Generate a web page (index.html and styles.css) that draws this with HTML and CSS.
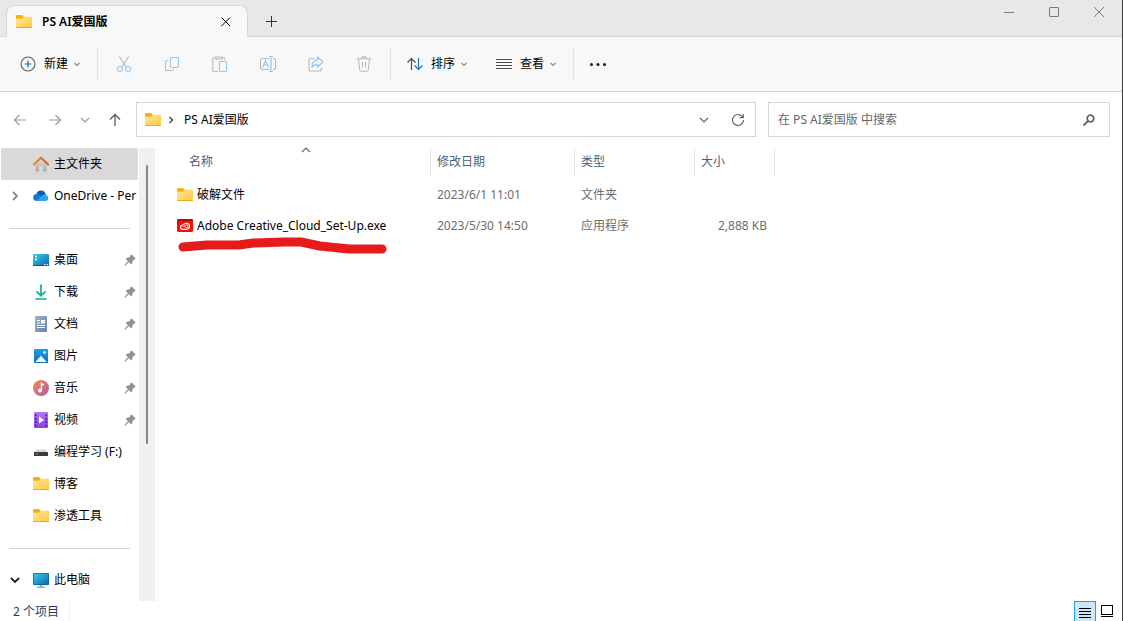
FILE: index.html
```html
<!DOCTYPE html>
<html lang="zh-CN">
<head>
<meta charset="utf-8">
<meta name="viewport" content="width=device-width, initial-scale=1">
<title>PS AI爱国版</title>
<link rel="stylesheet" href="styles.css">
</head>
<body>
<svg class="sprite" aria-hidden="true">
  <defs>
    <linearGradient id="g-folder" x1="0" y1="0" x2="1" y2="1"><stop offset="0" stop-color="#ffe69a"/><stop offset="1" stop-color="#ffca3a"/></linearGradient>
    <linearGradient id="g-roof" x1="0" y1="0" x2="1" y2="0"><stop offset="0" stop-color="#f08a24"/><stop offset="1" stop-color="#d9590f"/></linearGradient>
    <linearGradient id="g-wall" x1="0" y1="0" x2="0" y2="1"><stop offset="0" stop-color="#e4e4e4"/><stop offset="1" stop-color="#a9a9a9"/></linearGradient>
    <linearGradient id="g-screen" x1="0" y1="0" x2="1" y2="1"><stop offset="0" stop-color="#35d1e2"/><stop offset="1" stop-color="#0f66b5"/></linearGradient>
    <linearGradient id="g-doc" x1="0" y1="0" x2="1" y2="1"><stop offset="0" stop-color="#9db4cc"/><stop offset="1" stop-color="#6383a6"/></linearGradient>
    <linearGradient id="g-music" x1="0" y1="0" x2="1" y2="1"><stop offset="0" stop-color="#f19052"/><stop offset="1" stop-color="#ae5aa6"/></linearGradient>
    <linearGradient id="g-video" x1="0" y1="0" x2="0" y2="1"><stop offset="0" stop-color="#b377f5"/><stop offset="1" stop-color="#8b3fe4"/></linearGradient>
    <linearGradient id="g-picture" x1="0" y1="0" x2="0" y2="1"><stop offset="0" stop-color="#1da1e8"/><stop offset="1" stop-color="#0b6cc2"/></linearGradient>
  </defs>
  <symbol id="folder" viewBox="0 0 16 16"><path d="M0 2Q0 1 1 1H6L8 3V6H0Z" fill="#f5b30a"/><path d="M0 4.800H6L8 2.800H15Q16 2.800 16 3.800V13Q16 14 15 14H1Q0 14 0 13Z" fill="url(#g-folder)"/><path d="M.3 13.500H15.700" stroke="#e7a928"/></symbol>
  <symbol id="close" viewBox="0 0 16 16"><path d="M3.500 3.500L12 12M12 3.500L3.500 12" stroke="currentColor" fill="none"/></symbol>
  <symbol id="plus" viewBox="0 0 16 16"><path d="M3 8.500H14M8.500 3V14" stroke="currentColor" fill="none"/></symbol>
  <symbol id="chevron" viewBox="0 0 16 16"><path d="M4 6L8 10L12 6" stroke="currentColor" fill="none" stroke-width="1.200"/></symbol>
  <symbol id="chevron-bold" viewBox="0 0 16 16"><path d="M4 6L8 10L12 6" stroke="currentColor" fill="none" stroke-width="1.800"/></symbol>
  <symbol id="chevron-small" viewBox="0 0 16 16"><path d="M5.500 7L8 9.500L10.500 7" stroke="currentColor" fill="none" stroke-width="1.200"/></symbol>
  <symbol id="next" viewBox="0 0 16 16"><path d="M6 4L10 8L6 12" stroke="currentColor" fill="none" stroke-width="1.800"/></symbol>
  <symbol id="left" viewBox="0 0 16 16"><path d="M14 8H2.500M7.500 3L2.500 8L7.500 13" stroke="currentColor" fill="none" stroke-width="1.200"/></symbol>
  <symbol id="right" viewBox="0 0 16 16"><path d="M2 8H13.500M8.500 3L13.500 8L8.500 13" stroke="currentColor" fill="none" stroke-width="1.200"/></symbol>
  <symbol id="up" viewBox="0 0 16 16"><path d="M8 14V2.500M3 7.500L8 2.500L13 7.500" stroke="currentColor" fill="none" stroke-width="1.300"/></symbol>
  <symbol id="new" viewBox="0 0 16 16"><circle cx="8" cy="8" r="7" fill="none" stroke="#5b5b5b" stroke-width="1.100"/><path d="M8 4.600V11.400M4.600 8H11.400" stroke="#0f6cbd" stroke-width="1.200"/></symbol>
  <symbol id="cut" viewBox="0 0 16 16"><path d="M3.300 .5L10 11M12.700 .5L6 11" stroke="#b9b9b9" fill="none" stroke-width="1.100"/><circle cx="3.900" cy="13" r="2.500" fill="none" stroke="#9ccbf0" stroke-width="1.200"/><circle cx="12.100" cy="13" r="2.500" fill="none" stroke="#9ccbf0" stroke-width="1.200"/></symbol>
  <symbol id="copy" viewBox="0 0 16 16"><path d="M4.500 4.500H3.500Q1.500 4.500 1.500 6.500V12.500Q1.500 14.500 3.500 14.500H7.500Q9.500 14.500 9.500 13" fill="none" stroke="#bdbdbd" stroke-width="1.100"/><rect x="6.500" y="1.500" width="8" height="10" rx="1.500" fill="none" stroke="#93c7ef" stroke-width="1.100"/></symbol>
  <symbol id="paste" viewBox="0 0 16 16"><path d="M6 15.500H2Q.8 15.500 .8 14V3Q.8 1.700 2 1.700H4M10 1.700H12Q13 1.700 13 3V4M4 1H10V3H4Z" fill="none" stroke="#b9b9b9" stroke-width="1.100"/><rect x="7.500" y="5.500" width="7" height="10" rx="1" fill="none" stroke="#93c7ef" stroke-width="1.100"/></symbol>
  <symbol id="rename" viewBox="0 0 16 16"><path d="M9 2.500H2.500Q.5 2.500 .5 4.500V11.500Q.5 13.500 2.500 13.500H9M13 2.500H13.500Q15.500 2.500 15.500 4.500V11.500Q15.500 13.500 13.500 13.500H13" fill="none" stroke="#b9b9b9" stroke-width="1.100"/><path d="M2.700 11.500L5.500 4.500L8.300 11.500M3.800 9H7.200M11 .5V15.500M9 .5H13M9 15.500H13" fill="none" stroke="#93c7ef" stroke-width="1.200"/></symbol>
  <symbol id="share" viewBox="0 0 16 16"><path d="M6 2.500H3Q1 2.500 1 4.500V13Q1 15 3 15H11.500Q13.500 15 13.500 13V11.500" fill="none" stroke="#b9b9b9" stroke-width="1.100"/><path d="M9.500 1L15 6L9.500 11V8.300Q6 8 4 11.500Q4 4.500 9.500 3.800Z" fill="none" stroke="#93c7ef" stroke-width="1.200" stroke-linejoin="round"/></symbol>
  <symbol id="trash" viewBox="0 0 16 16"><path d="M.8 2.700H15.200M5.700 2.500Q5.700 .6 8 .6T10.300 2.500M2.500 3L3.800 14Q4 15.300 5.200 15.300H10.800Q12 15.300 12.200 14L13.500 3M6.500 6V11.500M9.500 6V11.500" fill="none" stroke="#b9b9b9" stroke-width="1.100"/></symbol>
  <symbol id="sort" viewBox="0 0 16 16"><path d="M4.500 14V2.500M.5 6.500L4.500 2.500L8.500 6.500" fill="none" stroke="#4e4e4e" stroke-width="1.200"/><path d="M11.500 2V13.500M7.500 9.500L11.500 13.500L15.500 9.500" fill="none" stroke="#0a78d4" stroke-width="1.200"/></symbol>
  <symbol id="view" viewBox="0 0 16 16"><path d="M0 3.500H16M0 6.500H16M0 9.500H16M0 12.500H16" stroke="#4e4e4e"/></symbol>
  <symbol id="more" viewBox="0 0 16 16"><g fill="#1b1b1b"><circle cx="1.500" cy="8.500" r="1.500"/><circle cx="8" cy="8.500" r="1.500"/><circle cx="14.500" cy="8.500" r="1.500"/></g></symbol>
  <symbol id="refresh" viewBox="0 0 16 16"><path d="M12.900 5.500A5.500 5.500 0 1 0 13.500 8M13.300 2V5.700H9.600" fill="none" stroke="currentColor" stroke-width="1.200"/></symbol>
  <symbol id="search" viewBox="0 0 16 16"><circle cx="9.500" cy="6.500" r="3.300" fill="none" stroke="currentColor" stroke-width="1.800"/><path d="M7 9L2.500 13.500" stroke="currentColor" stroke-width="1.800"/></symbol>
  <symbol id="minimize" viewBox="0 0 16 16"><path d="M3 8.500H13" stroke="currentColor"/></symbol>
  <symbol id="maximize" viewBox="0 0 16 16"><rect x="3.500" y="3.500" width="9" height="9" rx=".5" fill="none" stroke="currentColor"/></symbol>
  <symbol id="window-close" viewBox="0 0 16 16"><path d="M3 3L13 13M13 3L3 13" stroke="currentColor"/></symbol>
  <symbol id="home" viewBox="0 0 16 16"><path d="M2.500 7L8 2L13.500 7V14.500Q13.500 15.500 12.500 15.500H10V10H6V15.500H3.500Q2.500 15.500 2.500 14.500Z" fill="url(#g-wall)"/><path d="M.8 8.500L8 1.800L15.200 8.500" fill="none" stroke="url(#g-roof)" stroke-width="2" stroke-linecap="round" stroke-linejoin="round"/></symbol>
  <symbol id="cloud" viewBox="0 0 16 16"><path d="M3.500 6A4.700 4.700 0 0 1 12.500 5.500L13 8L6 12L2 10Z" fill="#0a5cb8"/><path d="M3.500 13A3.500 3.500 0 0 1 3.800 6Q5.500 5.900 7 7L14 12Z" fill="#1479d6"/><path d="M3 13L9.500 7.500Q11 6 13 7A3.100 3.100 0 0 1 13 13Z" fill="#28a8ea"/></symbol>
  <symbol id="desktop" viewBox="0 0 16 16"><rect y="2" width="16" height="12" rx="1" fill="url(#g-screen)"/><path d="M2 4.500H4M2 7.500H4" stroke="#fff" stroke-width="1.600"/><path d="M0 13.500H16" stroke="#0b559b"/><path d="M11 12.700H12.500M13.500 12.700H15" stroke="#fff"/></symbol>
  <symbol id="download" viewBox="0 0 16 16"><path d="M8 0.500V11.500M3.500 7.300L8 11.800L12.500 7.300M2.300 15H13.700" fill="none" stroke="#18ad88" stroke-width="1.700"/></symbol>
  <symbol id="document" viewBox="0 0 16 16"><rect x="2" width="12" height="16" rx="1" fill="url(#g-doc)"/><path d="M4 4.500H7M4 7H7M4 9.500H12M4 11.500H12" stroke="#fff"/><rect x="8" y="4" width="4" height="3.500" fill="#fff"/></symbol>
  <symbol id="picture" viewBox="0 0 16 16"><rect x="1" y="1" width="14" height="14" rx="1" fill="url(#g-picture)"/><path d="M2.300 14L8 7.800L13.700 14Z" fill="#fff"/><circle cx="11.500" cy="4.500" r="1.300" fill="#fff"/></symbol>
  <symbol id="music" viewBox="0 0 16 16"><circle cx="8" cy="8" r="8" fill="url(#g-music)"/><circle cx="7" cy="10.500" r="2" fill="#fff"/><path d="M8.500 10.500V3.500L11 5.300" fill="none" stroke="#fff" stroke-width="1.300"/></symbol>
  <symbol id="video" viewBox="0 0 16 16"><rect x="1" width="14" height="16" rx="1" fill="url(#g-video)"/><path d="M6 4.500L11 8L6 11.500Z" fill="#fff"/><path d="M2.800 2.500V14M13.200 2.500V14" stroke="#4b1792" stroke-width="1.600" stroke-dasharray="1.800 1.600"/></symbol>
  <symbol id="drive" viewBox="0 0 16 16"><path d="M3.500 5.500H12.500L15 9H1Z" fill="#d6d6d6"/><rect x="1" y="8" width="14" height="4" rx=".5" fill="#3c3c3c"/><path d="M3 10H5" stroke="#48d15b" stroke-width="1.200"/></symbol>
  <symbol id="pc" viewBox="0 0 16 16"><rect y="1" width="16" height="12" rx="1" fill="#0a5f9c"/><rect x=".7" y="1.700" width="14.600" height="10.600" fill="url(#g-screen)"/><path d="M6.500 13H9.500V15H6.500Z" fill="#a6afb6"/><path d="M4 15.300H12" stroke="#8995a0"/></symbol>
  <symbol id="pin" viewBox="0 0 16 16"><path d="M8.900 3Q9.400 2.400 10 3L13 6.200Q13.600 6.800 12.800 7.200L10.800 8.300L9.800 11.800Q9.500 12.400 8.900 11.900L6.900 9.900L3.200 13.400L2.700 12.900L6.100 9.100L4.200 7.200Q3.700 6.600 4.300 6.300L7.800 5.200Z" fill="#8a959d" stroke="#8a959d" stroke-width=".4"/></symbol>
  <symbol id="adobe" viewBox="0 0 16 16"><rect y="1" width="16" height="13" rx="1.500" fill="#fa0f00"/><path d="M0 3V2.500Q0 1 1.500 1H14.500Q16 1 16 2.500V3Z" fill="#b50b00"/><path d="M6 11.400Q3.500 11.400 3.500 9.200T6 7Q7.200 5.200 9.500 5.200Q12.500 5.500 12.500 8.300T9.500 11.400Z" fill="none" stroke="#fff" stroke-width="1.100"/><path d="M5.500 9.300Q6.500 7.700 7.700 8.600L9 10Q10.800 10 10.800 8.400T9 6.900Q7.800 7.300 7.500 8.500" fill="none" stroke="#fff" stroke-width=".9"/></symbol>
  <symbol id="details" viewBox="0 0 16 16"><path d="M2 4.500H14M2 7.500H14M2 10.500H14M2 13.500H14" stroke="#000"/></symbol>
  <symbol id="tiles" viewBox="0 0 16 16"><rect x="2.500" y="2.500" width="11" height="9" fill="none" stroke="#000"/><path d="M2 13.500H14" stroke="#000"/></symbol>
</svg>

<div class="window">
  <header class="titlebar">
    <div class="tab">
      <svg class="icon"><use href="#folder"/></svg>
      <span class="tab-title">PS AI爱国版</span>
      <button class="plain" aria-label="关闭标签页"><svg class="icon"><use href="#close"/></svg></button>
    </div>
    <button class="plain new-tab" aria-label="新建标签页"><svg class="icon"><use href="#plus"/></svg></button>
    <div class="window-controls">
      <button class="plain" aria-label="最小化"><svg class="icon"><use href="#minimize"/></svg></button>
      <button class="plain" aria-label="最大化"><svg class="icon"><use href="#maximize"/></svg></button>
      <button class="plain" aria-label="关闭"><svg class="icon"><use href="#window-close"/></svg></button>
    </div>
  </header>

  <div class="toolbar" role="toolbar">
    <div class="group group-new">
      <button class="command"><svg class="icon"><use href="#new"/></svg><span>新建</span><svg class="icon caret"><use href="#chevron-small"/></svg></button>
    </div>
    <div class="group group-edit">
      <button class="tool" aria-label="剪切" disabled><svg class="icon"><use href="#cut"/></svg></button>
      <button class="tool" aria-label="复制" disabled><svg class="icon"><use href="#copy"/></svg></button>
      <button class="tool" aria-label="粘贴" disabled><svg class="icon"><use href="#paste"/></svg></button>
      <button class="tool" aria-label="重命名" disabled><svg class="icon"><use href="#rename"/></svg></button>
      <button class="tool" aria-label="共享" disabled><svg class="icon"><use href="#share"/></svg></button>
      <button class="tool" aria-label="删除" disabled><svg class="icon"><use href="#trash"/></svg></button>
    </div>
    <div class="group group-view">
      <button class="command"><svg class="icon"><use href="#sort"/></svg><span>排序</span><svg class="icon caret"><use href="#chevron-small"/></svg></button>
      <button class="command"><svg class="icon"><use href="#view"/></svg><span>查看</span><svg class="icon caret"><use href="#chevron-small"/></svg></button>
    </div>
    <button class="tool" aria-label="更多"><svg class="icon"><use href="#more"/></svg></button>
  </div>

  <div class="navigation">
    <div class="history">
      <button class="plain" aria-label="后退"><svg class="icon"><use href="#left"/></svg></button>
      <button class="plain" aria-label="前进"><svg class="icon"><use href="#right"/></svg></button>
      <button class="plain" aria-label="最近位置"><svg class="icon"><use href="#chevron"/></svg></button>
      <button class="plain up" aria-label="向上"><svg class="icon"><use href="#up"/></svg></button>
    </div>
    <div class="address">
      <svg class="icon"><use href="#folder"/></svg>
      <svg class="icon small"><use href="#next"/></svg>
      <a class="crumb" href="#files">PS AI爱国版</a>
      <button class="plain" aria-label="历史记录"><svg class="icon"><use href="#chevron"/></svg></button>
      <button class="plain" aria-label="刷新"><svg class="icon"><use href="#refresh"/></svg></button>
    </div>
    <form class="search">
      <input type="text" aria-label="搜索" placeholder="在 PS AI爱国版 中搜索">
      <button class="plain" type="button" aria-label="开始搜索"><svg class="icon"><use href="#search"/></svg></button>
    </form>
  </div>

  <div class="content">
    <nav class="sidebar">
      <a class="place selected" href="#home"><svg class="icon"><use href="#home"/></svg><span>主文件夹</span></a>
      <a class="place expandable" href="#onedrive"><svg class="icon muted"><use href="#next"/></svg><svg class="icon"><use href="#cloud"/></svg><span>OneDrive - Per</span></a>
      <hr>
      <a class="place" href="#desktop"><svg class="icon"><use href="#desktop"/></svg><span>桌面</span><svg class="icon pin"><use href="#pin"/></svg></a>
      <a class="place" href="#download"><svg class="icon"><use href="#download"/></svg><span>下载</span><svg class="icon pin"><use href="#pin"/></svg></a>
      <a class="place" href="#document"><svg class="icon"><use href="#document"/></svg><span>文档</span><svg class="icon pin"><use href="#pin"/></svg></a>
      <a class="place" href="#picture"><svg class="icon"><use href="#picture"/></svg><span>图片</span><svg class="icon pin"><use href="#pin"/></svg></a>
      <a class="place" href="#music"><svg class="icon"><use href="#music"/></svg><span>音乐</span><svg class="icon pin"><use href="#pin"/></svg></a>
      <a class="place" href="#video"><svg class="icon"><use href="#video"/></svg><span>视频</span><svg class="icon pin"><use href="#pin"/></svg></a>
      <a class="place" href="#drive"><svg class="icon"><use href="#drive"/></svg><span>编程学习 (F:)</span></a>
      <a class="place" href="#blog"><svg class="icon"><use href="#folder"/></svg><span>博客</span></a>
      <a class="place" href="#tools"><svg class="icon"><use href="#folder"/></svg><span>渗透工具</span></a>
      <hr>
      <a class="place expandable" href="#pc"><svg class="icon open"><use href="#chevron-bold"/></svg><svg class="icon"><use href="#pc"/></svg><span>此电脑</span></a>
    </nav>
    <div class="scrollbar"><div class="thumb"></div></div>
    <main class="files" id="files">
      <table>
        <colgroup><col class="col-name"><col class="col-date"><col class="col-type"><col class="col-size"></colgroup>
        <thead>
          <tr>
            <th><div class="head sorted">名称<svg class="icon ascending"><use href="#chevron"/></svg></div></th>
            <th><div class="head">修改日期</div></th>
            <th><div class="head">类型</div></th>
            <th><div class="head">大小</div></th>
          </tr>
        </thead>
        <tbody>
          <tr>
            <td><a class="file" href="#folder-item"><svg class="icon"><use href="#folder"/></svg>破解文件</a></td>
            <td>2023/6/1 11:01</td><td>文件夹</td><td></td>
          </tr>
          <tr>
            <td>
              <a class="file marked" href="#setup"><svg class="icon"><use href="#adobe"/></svg>Adobe Creative_Cloud_Set-Up.exe
                <svg class="stroke" viewBox="0 0 210 20" aria-hidden="true"><path d="M6 11L30 9H62L76 7L108 6H124L143 10L172 13H205" fill="none" stroke="#e71b1b" stroke-width="9" stroke-linecap="round" stroke-linejoin="round"/></svg></a>
            </td>
            <td>2023/5/30 14:50</td><td>应用程序</td><td class="size">2,888 KB</td>
          </tr>
        </tbody>
      </table>
    </main>
  </div>

  <footer class="status">
    <span class="count">2 个项目</span>
    <div class="modes">
      <button class="mode active" aria-label="详细信息"><svg class="icon"><use href="#details"/></svg></button>
      <button class="mode" aria-label="大缩略图"><svg class="icon"><use href="#tiles"/></svg></button>
    </div>
  </footer>
</div>
</body>
</html>
```
FILE: styles.css
```css
* { box-sizing: border-box; }

body {
  margin: 0;
  color: #000;
  font: 12px/16px "Noto Sans", "Noto Sans CJK SC", sans-serif;
}

a { color: inherit; text-decoration: none; }
button, input { font: inherit; color: inherit; }
.sprite { position: absolute; width: 0; height: 0; }

.icon { display: block; flex: none; width: 16px; height: 16px; }
.icon.small { width: 12px; height: 12px; }

.window {
  display: flex;
  flex-direction: column;
  height: 100vh;
  overflow: hidden;
  background: #fff;
  border-right: 1px solid #3a3a3a;
}

.plain { padding: 0; border: 0; background: none; }

/* Title bar */
.titlebar {
  display: flex;
  flex: none;
  height: 37px;
  padding: 5px 0 0 6px;
  background: #e8e8e8;
  box-shadow: inset 0 -1px #d6d6d6;
}

.tab {
  display: flex;
  align-items: center;
  width: 242px;
  padding: 0 13px 0 9px;
  background: #f8f8f8;
  border: 1px solid #d6d6d6;
  border-bottom: 0;
  border-radius: 8px 8px 0 0;
}

.tab-title { flex: 1; margin-left: 10px; font-weight: 600; }
.new-tab { margin-left: 15px; color: #333; }

.window-controls {
  display: flex;
  align-items: flex-start;
  gap: 29px;
  margin-left: auto;
  padding-right: 15px;
  color: #7a7a7a;
}

.window-controls .icon { margin-top: -1px; }

/* Command bar */
.toolbar {
  display: flex;
  flex: none;
  align-items: center;
  height: 55px;
  padding-left: 20px;
  background: #f8f8f8;
  border-bottom: 1px solid #d6d6d6;
}

.group { display: flex; align-items: center; height: 32px; border-right: 1px solid #e2e2e2; }
.group-new { width: 78px; }
.group-edit { width: 293px; padding-left: 2px; }
.group-view { width: 183px; padding-left: 16px; gap: 24px; }

.command {
  display: flex;
  align-items: center;
  padding: 0;
  border: 0;
  background: none;
}

.command span { margin: 0 1px 0 8px; }
.caret { color: #8a8a8a; }
.tool { display: flex; justify-content: center; width: 48px; padding: 0; border: 0; background: none; }

/* Navigation row */
.navigation {
  display: flex;
  flex: none;
  gap: 12px;
  padding: 10px 12px 11px;
}

.history { display: flex; align-items: center; gap: 14px; color: #9a9a9a; margin-right: 1px; }
.history .plain:first-child { margin-right: 5px; }
.history .up { color: #5c5c5c; }

.address, .search {
  display: flex;
  align-items: center;
  height: 35px;
  border: 1px solid #d6d6d6;
  color: #666;
}

.address { flex: 1; gap: 9px; padding: 0 9px 0 8px; }
.address .small { margin: 0 -4px 0 -5px; color: #444; }
.address .plain + .plain { margin-left: 9px; }
.crumb { flex: 1; margin-left: 2px; color: #000; }

.search { flex: 0 1 342px; min-width: 0; padding: 0 12px 0 9px; }
.search input { flex: 1; min-width: 0; padding: 0; border: 0; outline: 0; background: none; }
.search input::placeholder { color: #666; opacity: 1; }

/* Body */
.content { display: flex; flex: 1; min-height: 0; }

.sidebar { width: 138px; overflow: hidden; }
.sidebar hr { height: 1px; margin: 16px 8px 15px 9px; border: 0; background: #d2d2d2; }

.place {
  display: flex;
  align-items: center;
  height: 32px;
  margin-left: 1px;
  padding-left: 32px;
  white-space: nowrap;
}

.place span { margin-left: 5px; }
.place.expandable { padding-left: 6px; }
.expandable .icon + .icon { margin-left: 10px; }
.selected { background: #d9d9d9; border-radius: 2px; }
.muted { color: #8a8a8a; }
.open { color: #222; }
.pin { margin: 0 0 0 auto; }

.scrollbar { flex: none; width: 17px; padding: 17px 8px 0 7px; background: #f0f0f0; border-left: 1px solid #fff; }
.thumb { width: 2px; height: 279px; background: #858585; border-radius: 1px; }

.files { flex: 1; min-width: 0; margin-left: 2px; border-left: 1px solid #f5f5f5; }

table { width: 617px; table-layout: fixed; border-collapse: collapse; }
.col-name { width: 273px; }
.col-date { width: 144px; }
.col-type { width: 120px; }
.col-size { width: 80px; }

th { height: 31px; padding: 0; font-weight: 400; text-align: left; vertical-align: top; color: #4c607a; }
.head { height: 28px; padding: 6px 0 0 6px; border-right: 1px solid #e5e5e5; }
.sorted { position: relative; padding-left: 31px; }
.ascending { position: absolute; top: -6px; left: 50%; margin-left: 4px; transform: rotate(180deg); color: #666; }

td { height: 31px; padding: 0 0 0 6px; color: #6d6d6d; white-space: nowrap; }
td:first-child { padding-left: 19px; }
td.size { padding-right: 8px; text-align: right; }
.file { display: flex; align-items: center; gap: 4px; color: #000; }
.marked { position: relative; }
.stroke { position: absolute; top: 18px; left: 0; width: 210px; height: 20px; }

/* Status bar */
.status { display: flex; flex: none; height: 20px; padding-left: 13px; color: #1f3a5f; }
.count { padding: 3px 10px 0 0; border-right: 1px solid #f3f3f3; }
.modes { display: flex; margin-left: auto; padding-right: 4px; }
.mode { display: flex; align-items: center; justify-content: center; width: 22px; padding: 0; border: 0; background: none; }
.mode.active { background: #cce8f6; border: 1px solid #26a0da; border-bottom: 0; }
```
